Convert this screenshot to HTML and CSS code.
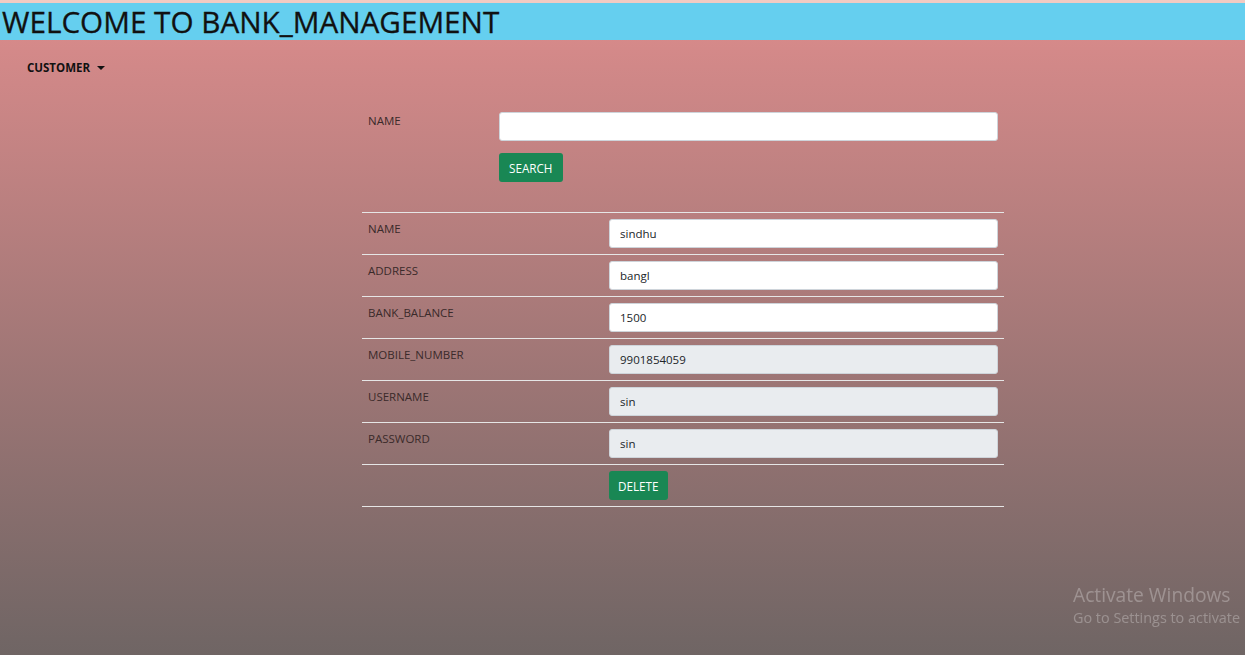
FILE: index.html
```html
<!DOCTYPE html>
<html>
<head>
<meta charset="utf-8">
<title>Bank Management</title>
<link rel="stylesheet" href="styles.css">
</head>
<body>
<div class="topstrip"></div>
<header class="banner"><h1 class="banner-title">WELCOME TO BANK_MANAGEMENT</h1></header>
<main class="page">
  <nav class="nav">
    <span class="nav-item">CUSTOMER <span class="caret"></span></span>
  </nav>
  <section class="panel">
    <form class="search">
      <label class="search-label">NAME</label>
      <div class="search-fields">
        <input class="field" type="text" value="">
        <button type="button" class="btn">SEARCH</button>
      </div>
    </form>
    <table class="details">
      <tr><td class="lbl">NAME</td><td class="val"><input class="field" value="sindhu"></td></tr>
      <tr><td class="lbl">ADDRESS</td><td class="val"><input class="field" value="bangl"></td></tr>
      <tr><td class="lbl">BANK_BALANCE</td><td class="val"><input class="field" value="1500"></td></tr>
      <tr><td class="lbl">MOBILE_NUMBER</td><td class="val"><input class="field ro" value="9901854059" readonly></td></tr>
      <tr><td class="lbl">USERNAME</td><td class="val"><input class="field ro" value="sin" readonly></td></tr>
      <tr><td class="lbl">PASSWORD</td><td class="val"><input class="field ro" value="sin" readonly></td></tr>
      <tr><td class="lbl"></td><td class="val"><button type="button" class="btn btn-narrow">DELETE</button></td></tr>
    </table>
  </section>
</main>
<div class="watermark">
  <div class="wm-title">Activate Windows</div>
  <div class="wm-sub">Go to Settings to activate</div>
</div>
</body>
</html>
```
FILE: styles.css
```css
html, body {
  margin: 0;
  padding: 0;
  height: 100%;
}
body {
  font-family: "Open Sans", "Noto Sans", sans-serif;
  background: linear-gradient(to bottom, #dc8c8c 0%, #6f6564 100%);
  min-height: 655px;
  overflow: hidden;
}
.topstrip {
  height: 3px;
  background: #f2cbc3;
}
.banner {
  background: #65cfef;
  height: 37px;
  display: flex;
  align-items: center;
}
.banner-title {
  margin: 0;
  padding-left: 2px;
  font-size: 29.7px;
  font-weight: 400;
  color: #111;
  -webkit-text-stroke: 0.3px #111;
  line-height: 37px;
}
.nav {
  padding: 15px 0 0 27px;
  height: 36px;
  box-sizing: border-box;
}
.nav-item {
  font-size: 11.5px;
  font-weight: 700;
  color: #111;
  display: inline-flex;
  align-items: center;
}
.caret {
  display: inline-block;
  margin-left: 7px;
  width: 0;
  height: 0;
  border-left: 4px solid transparent;
  border-right: 4px solid transparent;
  border-top: 4px solid #111;
}
.panel {
  width: 642px;
  margin: 36px 0 0 362px;
}
.search {
  display: flex;
  padding-bottom: 30px;
}
.search-label {
  width: 131px;
  padding: 1px 0 0 6px;
  font-size: 11.5px;
  color: #3a2a2a;
}
.search-fields {
  display: flex;
  flex-direction: column;
  align-items: flex-start;
  gap: 12px;
  width: 499px;
}
.search-fields .field {
  width: 499px;
}
.field {
  box-sizing: border-box;
  height: 29px;
  width: 389px;
  border: 1px solid #ced4da;
  border-radius: 3px;
  background: #fff;
  padding: 0 10px;
  font-family: "Open Sans", "Noto Sans", sans-serif;
  font-size: 11.5px;
  color: #212529;
  outline: none;
}
.field.ro {
  background: #e9ecef;
}
.btn {
  height: 29px;
  padding: 0 10px;
  border: none;
  border-radius: 3px;
  background: #198754;
  color: #fff;
  font-family: "Open Sans", "Noto Sans", sans-serif;
  font-size: 11.7px;
}
.btn-narrow {
  padding: 0 9px;
}
.details {
  width: 642px;
  border-collapse: collapse;
}
.details tr {
  border-top: 1px solid #e6e6e6;
  border-bottom: 1px solid #e6e6e6;
  height: 42px;
}
.details td {
  padding: 6px;
  vertical-align: top;
}
.lbl {
  width: 229px;
  font-size: 11.5px;
  color: #3a2a2a;
  padding-top: 8px !important;
}
.val .field, .val .btn {
  display: block;
}
.watermark {
  position: fixed;
  left: 1073px;
  top: 583px;
  color: rgba(255,255,255,0.28);
  white-space: nowrap;
}
.wm-title {
  font-size: 19.2px;
  line-height: 23px;
}
.wm-sub {
  font-size: 14.4px;
  line-height: 24px;
}
```
